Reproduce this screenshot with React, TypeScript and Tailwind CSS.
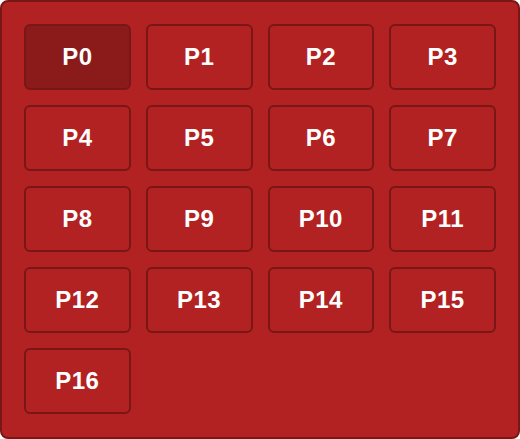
const pins = Array.from({ length: 17 }, (_, i) => `P${i}`);

export default function App() {
  return (
    <div className="w-[520px] h-[439px] bg-[#b22222] border-2 border-[#7a1616] rounded-lg p-[22px] font-['Liberation_Sans',Arial,sans-serif]">
      <div className="grid grid-cols-4 gap-[15px] auto-rows-[66px]">
        {pins.map((p, i) => (
          <button
            key={p}
            className={
              "rounded-md border-2 border-[#7a1616] text-white text-[24px] font-bold tracking-[0.5px] flex items-center justify-center " +
              (i === 0 ? "bg-[#8b1a1a]" : "bg-[#b22222]")
            }
          >
            {p}
          </button>
        ))}
      </div>
    </div>
  );
}
